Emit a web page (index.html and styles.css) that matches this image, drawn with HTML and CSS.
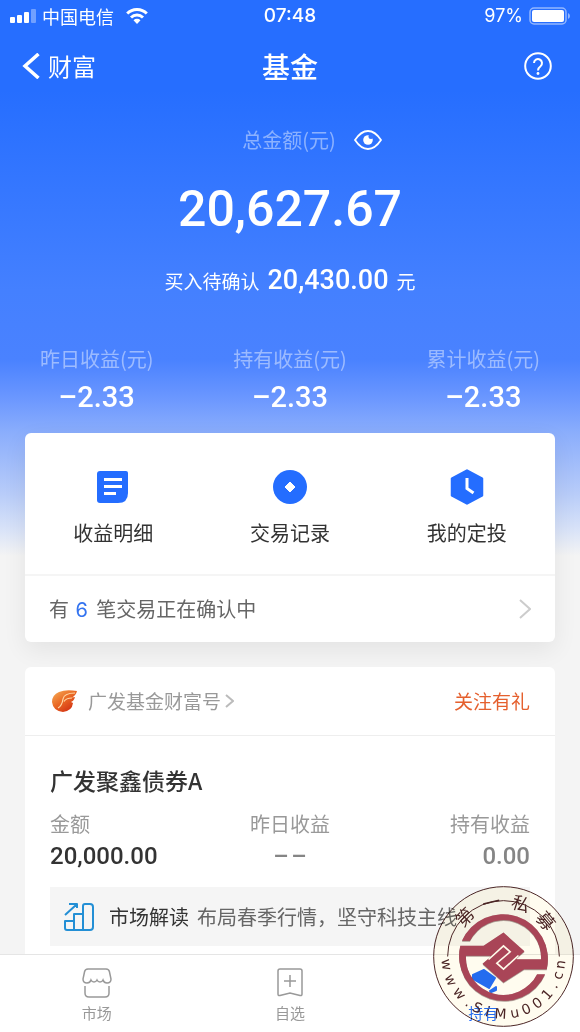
FILE: index.html
```html
<!DOCTYPE html>
<html lang="zh-CN">
<head>
<meta charset="utf-8">
<meta name="viewport" content="width=device-width, initial-scale=1">
<title>基金</title>
<link rel="stylesheet" href="styles.css">
</head>
<body>
<div class="app">
  <main class="content">
    <div class="status">
      <div class="status-left">
        <svg width="26" height="14" viewBox="0 0 26 14" fill="#fff" aria-hidden="true"><rect x="0" y="8" width="5" height="6" rx="1"/><rect x="7" y="6" width="5" height="8" rx="1"/><rect x="14" y="3" width="5" height="11" rx="1"/><rect x="21" y="0" width="5" height="14" rx="1" opacity=".35"/></svg>
        <span>中国电信</span>
        <svg class="wifi" width="22" height="16" viewBox="0 0 22 16" fill="none" stroke="#fff" stroke-width="3" aria-hidden="true"><path d="M1.200 5.500a14 14 0 0 1 19.600 0M5 9.500a8.600 8.600 0 0 1 12 0"/><path d="M7.500 12.300a5 5 0 0 1 7 0L11 16z" fill="#fff" stroke="none"/></svg>
      </div>
      <span class="clock">07:48</span>
      <div class="status-right">
        <span>97%</span>
        <svg width="41" height="18" viewBox="0 0 41 18" aria-hidden="true"><rect x="1" y="1" width="36" height="16" rx="4" fill="none" stroke="#fff" stroke-opacity=".5" stroke-width="1.500"/><rect x="3" y="3" width="32" height="12" rx="2" fill="#fff"/><path d="M39 6q2 1 2 3t-2 3z" fill="#fff" opacity=".5"/></svg>
      </div>
    </div>

    <header class="nav">
      <button class="back" type="button">
        <svg width="18" height="26" viewBox="0 0 18 26" fill="none" stroke="#fff" stroke-width="3.500" aria-hidden="true"><path d="M16.500 1L3 13l13.500 12"/></svg>
        <span>财富</span>
      </button>
      <h1>基金</h1>
      <button class="help" type="button" aria-label="帮助">
        <svg width="28" height="28" viewBox="0 0 28 28" fill="none" stroke="#fff" stroke-width="2" aria-hidden="true"><circle cx="14" cy="14" r="12.800"/><path d="M10 11a4 4 0 1 1 6.500 3.200Q14 16 14 18.500"/><circle cx="14" cy="21.500" r="1.400" fill="#fff" stroke="none"/></svg>
      </button>
    </header>

    <section class="summary">
      <div class="total-label">
        <span>总金额(元)</span>
        <button type="button" aria-label="隐藏金额">
          <svg width="28" height="20" viewBox="0 0 28 20" aria-hidden="true"><path d="M1 10Q7 1 14 1t13 9q-6 9-13 9T1 10z" fill="none" stroke="#fff" stroke-width="1.800"/><circle cx="14" cy="10" r="4.800" fill="#fff"/><circle cx="17" cy="6.500" r="2.500" fill="#3777ff"/></svg>
        </button>
      </div>
      <p class="total">20,627.67</p>
      <p class="pending"><span>买入待确认</span><b>20,430.00</b><span>元</span></p>
      <dl class="stats">
        <div><dt>昨日收益(元)</dt><dd>–2.33</dd></div>
        <div><dt>持有收益(元)</dt><dd>–2.33</dd></div>
        <div><dt>累计收益(元)</dt><dd>–2.33</dd></div>
      </dl>
    </section>

    <section class="card actions-card">
      <div class="actions">
        <button type="button">
          <svg width="36" height="36" viewBox="0 0 36 36" aria-hidden="true"><path d="M5 2h26q2 0 2 2v20q0 10-10 10H5q-3 0-3-3V5q0-3 3-3z" fill="#246dff"/><path d="M9 10.500h18M9 17.500h18M9 24.500h12" stroke="#fff" stroke-width="3"/></svg>
          <span>收益明细</span>
        </button>
        <button type="button">
          <svg width="36" height="36" viewBox="0 0 36 36" aria-hidden="true"><circle cx="18" cy="18" r="17" fill="#246dff"/><path d="M18 13l5 5-5 5-5-5z" fill="#fff" stroke="#fff" stroke-linejoin="round"/></svg>
          <span>交易记录</span>
        </button>
        <button type="button">
          <svg width="36" height="36" viewBox="0 0 36 36" aria-hidden="true"><path d="M18 1.500L33 9.500v17l-15 8-15-8v-17z" fill="#246dff" stroke="#246dff" stroke-width="2.500" stroke-linejoin="round"/><path d="M18 9v10.500l6.500 4.500" fill="none" stroke="#fff" stroke-width="3"/></svg>
          <span>我的定投</span>
        </button>
      </div>
      <a class="confirming" href="#">
        <span>有 <em>6</em> 笔交易正在确认中</span>
        <svg width="12" height="20" viewBox="0 0 12 20" fill="none" stroke="#ccc" stroke-width="2" aria-hidden="true"><path d="M1 1l10 9L1 19"/></svg>
      </a>
    </section>

    <section class="card fund">
      <div class="fund-head">
        <a class="brand" href="#">
          <svg width="28" height="26" viewBox="0 0 28 26" aria-hidden="true">
            <defs><linearGradient id="flame" x1="0" y1="0" x2=".8" y2="1"><stop offset="0" stop-color="#f6b05a"/><stop offset=".5" stop-color="#ea6a25"/><stop offset="1" stop-color="#cf2910"/></linearGradient></defs>
            <path d="M27 3Q16 1 9 4 2 7 2 14q1 9 11 10 9-1 10-9l-2-1q3-1 4-5l-3 .500Q26 7 27 3z" fill="url(#flame)"/>
            <path d="M25 5Q14 5 13 11q-1 7-5 9M22 10q-6 0-8 3.500" fill="none" stroke="#ffd9a8" stroke-width="1.200"/>
          </svg>
          <span>广发基金财富号</span>
          <svg width="9" height="14" viewBox="0 0 9 14" fill="none" stroke="#bbb" stroke-width="2" aria-hidden="true"><path d="M1 1l7 6-7 6"/></svg>
        </a>
        <a class="follow" href="#">关注有礼</a>
      </div>
      <div class="fund-body">
        <h2>广发聚鑫债券A</h2>
        <dl class="figures">
          <div><dt>金额</dt><dd class="strong">20,000.00</dd></div>
          <div><dt>昨日收益</dt><dd>–&#8202;–</dd></div>
          <div><dt>持有收益</dt><dd>0.00</dd></div>
        </dl>
        <a class="insight" href="#">
          <svg width="32" height="30" viewBox="0 0 32 30" fill="none" stroke="#238fd5" stroke-width="2" stroke-linejoin="round" aria-hidden="true"><path d="M2 19h9v9H4q-2 0-2-2zM11 12h9v16h-9zM20 4q0-2 2-2h5q3 0 3 3v20q0 3-3 3h-7zM2 13L13 3M6 2h8v4"/></svg>
          <strong>市场解读</strong>
          <span>布局春季行情，坚守科技主线</span>
        </a>
      </div>
    </section>
  </main>

  <nav class="tabs">
    <a href="#">
      <svg width="32" height="32" viewBox="0 0 32 32" fill="none" stroke="#999" stroke-width="1.500" aria-hidden="true"><path d="M7 2h18q3 0 3.500 3L30 12q0 4-4 4-3 0-4-3-1 2-3 2t-3-2q-1 2-3 2t-3-2q-1 3-4 3-4 0-4-4l1.500-7Q4 2 7 2zM4 19v7q0 4 4 4h16q4 0 4-4v-7"/></svg>
      <span>市场</span>
    </a>
    <a href="#">
      <svg width="32" height="32" viewBox="0 0 32 32" fill="none" stroke="#999" stroke-width="1.500" aria-hidden="true"><path d="M6 2h20q2 0 2 2v23q0 2-2 1.500L16 26 6 28.500Q4 29 4 27V4q0-2 2-2zM16 8v12M10 14h12"/></svg>
      <span>自选</span>
    </a>
    <a class="active" href="#">
      <svg width="32" height="32" viewBox="0 0 32 32" fill="#246dff" stroke="#246dff" stroke-width="2" stroke-linejoin="round" aria-hidden="true"><path d="M6 8l11-5 11 8-6 10L6 12zM23 24l6-4v3l-5 2z"/></svg>
      <span>持有</span>
    </a>
  </nav>

  <svg class="seal" viewBox="38 26 424 424" role="img" aria-label="第一私募 www.SiMu001.cn">
    <circle cx="250" cy="238" r="210" class="seal-disc"/>
    <path d="M82 238a168 168 0 0 1 336 0" fill="none" stroke="#4b2525" stroke-width="3"/>
    <g class="seal-ring">
      <path d="M125 191A135 135 0 0 1 380 276H312L250 316 187 260 250 206 290 246H363A113 113 0 0 0 149 191z"/>
      <path d="M375 291A135 135 0 0 1 120 206H190L250 166 313 222 250 276 210 236H137A113 113 0 0 0 351 291z"/>
    </g>
    <path d="M205 247L250 206 270 224 230 258 250 276 295 235" fill="none" stroke="#fffbea" stroke-width="5"/>
    <text class="seal-name" x="128 191 270 345" y="152 101 90 123" rotate="-45 -13 18 50">第一私募</text>
    <text class="seal-url" x="63 72 96 132 153 193 222 273 312 349 383 409 423 433" y="247 299 345 383 399 416 424 424 415 397 371 337 310 277" rotate="82 66 50 37 27 16 3 -11 -23 -36 -49 -60 -71 -82">www.SiMu001.cn</text>
  </svg>
</div>
</body>
</html>
```
FILE: styles.css
```css
* { box-sizing: border-box; }
body, h1, h2, p, dl, dd { margin: 0; }
body {
  font-family: "Noto Sans CJK SC", sans-serif;
  font-size: 20px;
  line-height: 28px;
  color: #333;
  background: #f4f4f4;
}
button {
  padding: 0;
  border: 0;
  background: none;
  color: inherit;
  font: inherit;
  cursor: pointer;
}
a { color: inherit; text-decoration: none; }
svg { display: block; flex: none; }

.app {
  position: relative;
  display: flex;
  flex-direction: column;
  height: 100vh;
}
.content {
  flex: 1;
  min-height: 0;
  overflow: hidden;
  background: linear-gradient(#266eff 0, #266eff 90px, #4480ff 290px, #4a82ff 360px, #6b97ff 398px, #8baefc 433px, #b9cdf9 495px, #d9e3f8 530px, #f4f4f4 556px);
}

.status {
  display: grid;
  grid-template-columns: 1fr auto 1fr;
  align-items: center;
  height: 32px;
  padding: 0 10px;
  color: #fff;
  font-size: 19px;
}
.status-left, .status-right { display: flex; align-items: center; gap: 6px; }
.status-left { font-size: 18px; }
.wifi { margin-left: 6px; }
.status-right { justify-content: flex-end; }
.status-right, .clock { font-family: Inter, sans-serif; }
.status-right { font-size: 18px; }
.clock { font-weight: 500; }

.nav {
  display: grid;
  grid-template-columns: 1fr auto 1fr;
  align-items: center;
  height: 68px;
  padding: 0 22px;
  color: #fff;
}
.back { display: flex; align-items: center; gap: 8px; font-size: 24px; }
.nav h1 { font-size: 28px; font-weight: 500; line-height: 40px; }
.help { justify-self: end; margin-right: 6px; }

.summary { color: #fff; text-align: center; }
.total-label {
  display: flex;
  justify-content: center;
  align-items: center;
  gap: 18px;
  padding: 26px 0 0 44px;
}
.total-label span, .stats dt { color: rgba(255, 255, 255, .45); }
.total, .pending b, .stats dd, .figures dd { font-family: Roboto, sans-serif; font-weight: 500; }
.total { margin-top: 23px; font-size: 50px; line-height: 64px; }
.pending {
  display: flex;
  justify-content: center;
  align-items: baseline;
  gap: 8px;
  margin-top: 23px;
  font-size: 19px;
  line-height: 32px;
}
.pending b { font-size: 27px; }
.stats { display: grid; grid-template-columns: repeat(3, 1fr); padding: 48px 0 18px; }
.stats dd { margin-top: 6px; font-size: 29px; line-height: 36px; }

.card { margin: 0 25px 25px; border-radius: 6px; background: #fff; }
.actions-card { box-shadow: 0 8px 24px rgba(0, 0, 0, .07); }
.actions { display: grid; grid-template-columns: repeat(3, 1fr); padding: 36px 0 27px; }
.actions button {
  display: flex;
  flex-direction: column;
  align-items: center;
  gap: 14px;
}
.confirming {
  display: flex;
  align-items: center;
  justify-content: space-between;
  height: 68px;
  padding: 0 24px;
  border-top: 2px solid #f5f5f5;
  color: #666;
}
.confirming em { margin: 0 4px 0 2px; color: #3474f0; font-family: Inter, sans-serif; font-style: normal; }

.fund-head {
  display: flex;
  align-items: center;
  justify-content: space-between;
  height: 69px;
  padding: 0 25px;
  border-bottom: 1px solid #eee;
  font-size: 19px;
}
.brand { display: flex; align-items: center; gap: 4px; color: #999; }
.brand span { margin-left: 6px; }
.follow { color: #e5602e; }
.fund-body { padding: 28px 25px; }
.fund-body h2 { font-size: 23px; font-weight: 500; line-height: 32px; }
.figures {
  display: grid;
  grid-template-columns: repeat(3, 1fr);
  margin-top: 14px;
  text-align: center;
}
.figures div:first-child { text-align: left; }
.figures div:last-child { text-align: right; }
.figures dt { color: #999; }
.figures dd { margin-top: 4px; color: #858585; font-size: 24px; line-height: 28px; }
.figures .strong { color: #333; }
.insight {
  display: flex;
  align-items: center;
  gap: 8px;
  height: 59px;
  margin-top: 17px;
  padding: 0 13px;
  background: #f5f5f5;
  color: #666;
  white-space: nowrap;
}
.insight strong { margin-left: 6px; color: #333; font-weight: 400; }

.tabs {
  display: grid;
  grid-template-columns: repeat(3, 1fr);
  height: 78px;
  padding-top: 12px;
  border-top: 1px solid #e5e5e5;
  background: #fff;
}
.tabs a {
  display: flex;
  flex-direction: column;
  align-items: center;
  gap: 4px;
  color: #999;
  font-size: 15px;
  line-height: 20px;
}
.tabs .active { color: #246dff; }

.seal { position: absolute; right: 6px; bottom: 5px; width: 141px; pointer-events: none; }
.seal-disc { fill: #fffcef; stroke: #4b2525; stroke-width: 3; mix-blend-mode: multiply; }
.seal-ring { fill: #a94557; filter: drop-shadow(0 2px 2px rgba(60, 20, 20, .6)); }
.seal-name { fill: #4b2525; font-size: 54px; }
.seal-url { fill: #4b2525; font-family: "DejaVu Sans", sans-serif; font-size: 42px; }
```
